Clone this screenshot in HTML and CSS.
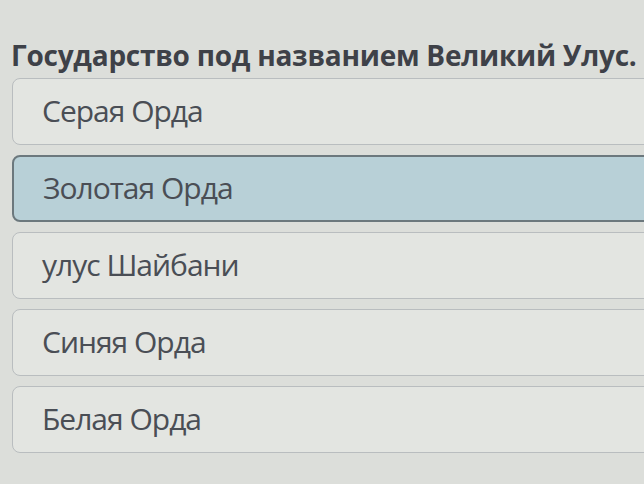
FILE: index.html
```html
<!DOCTYPE html>
<html lang="ru">
<head>
<meta charset="utf-8">
<link rel="stylesheet" href="styles.css">
</head>
<body>
<main class="quiz">
  <h1 class="question">Государство под названием Великий Улус.</h1>
  <ul class="options">
    <li class="option">Серая Орда</li>
    <li class="option selected">Золотая Орда</li>
    <li class="option">улус Шайбани</li>
    <li class="option">Синяя Орда</li>
    <li class="option">Белая Орда</li>
  </ul>
</main>
</body>
</html>
```
FILE: styles.css
```css
html, body {
  margin: 0;
  padding: 0;
  background: #dcdeda;
}
body {
  width: 644px;
  height: 484px;
  overflow: hidden;
  font-family: "Open Sans", "Noto Sans", sans-serif;
}
.quiz {
  padding: 36px 0 0 12px;
}
.question {
  margin: 0 0 0 -1px;
  font-size: 28px;
  line-height: 38px;
  font-weight: 700;
  letter-spacing: -0.25px;
  color: #3e4148;
  white-space: nowrap;
}
.options {
  list-style: none;
  margin: 4px 0 0 0;
  padding: 0;
  display: flex;
  flex-direction: column;
  gap: 10px;
  width: 660px;
}
.option {
  box-sizing: border-box;
  height: 67px;
  display: flex;
  align-items: center;
  padding: 0 0 3px 29px;
  background: #e3e5e1;
  border: 1.5px solid #b9bdbf;
  border-radius: 8px;
  font-size: 30px;
  letter-spacing: -1px;
  color: #4a4e55;
}
.option.selected {
  background: #b8d0d7;
  border: 2px solid #6c787d;
}
```
